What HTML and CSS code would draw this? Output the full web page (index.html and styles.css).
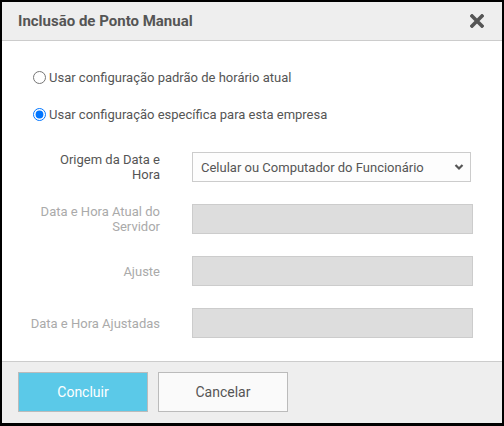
FILE: index.html
```html
<!DOCTYPE html>
<html lang="pt-BR">
<head>
<meta charset="utf-8">
<title>Inclusão de Ponto Manual</title>
<link rel="stylesheet" href="styles.css">
</head>
<body>
<div class="dialog">
  <div class="dialog-header">
    <h1 class="dialog-title">Inclusão de Ponto Manual</h1>
    <button class="close-btn" type="button" aria-label="Fechar">
      <svg width="14" height="14" viewBox="0 0 14 14"><path d="M2 2 L12 12 M12 2 L2 12" stroke="#555" stroke-width="3.6" stroke-linecap="square"/></svg>
    </button>
  </div>
  <div class="dialog-body">
    <label class="radio-row"><input type="radio" name="cfg"><span>Usar configuração padrão de horário atual</span></label>
    <label class="radio-row"><input type="radio" name="cfg" checked><span>Usar configuração específica para esta empresa</span></label>
    <div class="form">
      <div class="form-row">
        <label class="form-label">Origem da Data e Hora</label>
        <div class="select-wrap">
          <select class="select">
            <option>Celular ou Computador do Funcionário</option>
          </select>
          <svg class="chevron" width="10" height="8" viewBox="0 0 10 8"><path d="M1.5 2 L5 5.5 L8.5 2" fill="none" stroke="#555" stroke-width="2.2"/></svg>
        </div>
      </div>
      <div class="form-row">
        <label class="form-label disabled">Data e Hora Atual do Servidor</label>
        <input class="input" type="text" disabled>
      </div>
      <div class="form-row">
        <label class="form-label disabled">Ajuste</label>
        <input class="input" type="text" disabled>
      </div>
      <div class="form-row">
        <label class="form-label disabled">Data e Hora Ajustadas</label>
        <input class="input" type="text" disabled>
      </div>
    </div>
  </div>
  <div class="dialog-footer">
    <button class="btn btn-primary" type="button">Concluir</button>
    <button class="btn btn-default" type="button">Cancelar</button>
  </div>
</div>
</body>
</html>
```
FILE: styles.css
```css
html, body {
  margin: 0;
  padding: 0;
  background: #000;
}
body {
  font-family: Roboto, "Liberation Sans", Arial, sans-serif;
  color: #555;
}
.dialog {
  width: 500px;
  height: 421px;
  border: 2px solid #000;
  border-bottom-width: 3px;
  background: #fff;
  display: flex;
  flex-direction: column;
}
.dialog-header {
  height: 38px;
  background: #eeeeee;
  border-bottom: 1px solid #cccccc;
  display: flex;
  align-items: center;
  justify-content: space-between;
  padding: 0 18px 0 16px;
}
.dialog-title {
  margin: 0;
  font-size: 15px;
  font-weight: 700;
  color: #555;
}
.close-btn {
  border: 0;
  background: none;
  padding: 0;
  width: 14px;
  height: 14px;
  display: block;
  cursor: pointer;
}
.close-btn svg { display: block; }
.dialog-body {
  flex: 1;
  padding: 28px 0 0 0;
}
.radio-row {
  display: flex;
  align-items: center;
  height: 16px;
  margin-left: 26px;
  margin-bottom: 21px;
  font-size: 13px;
  color: #555;
}
.radio-row input {
  margin: 0 3px 0 5px;
  width: 13px;
  height: 13px;
}
.form {
  padding-top: 9px;
  display: flex;
  flex-direction: column;
  gap: 22px;
}
.form-row {
  display: flex;
  align-items: center;
  height: 30px;
}
.form-label {
  width: 130px;
  margin-left: 28px;
  margin-right: 32px;
  text-align: right;
  font-size: 13px;
  line-height: 15px;
  color: #555;
}
.form-label.disabled { color: #aaa; }
.select-wrap {
  position: relative;
  width: 279px;
  height: 30px;
}
.select {
  -webkit-appearance: none;
  appearance: none;
  width: 279px;
  height: 30px;
  box-sizing: border-box;
  border: 1px solid #cccccc;
  background: #fdfdfd;
  font-family: inherit;
  font-size: 13px;
  color: #555;
  padding: 0 0 0 8px;
  margin: 0;
  border-radius: 0;
}
.chevron {
  position: absolute;
  right: 7px;
  top: 11px;
}
.input {
  width: 281px;
  height: 30px;
  box-sizing: border-box;
  border: 1px solid #cccccc;
  background: #dddddd;
  margin: 0;
  padding: 0;
  border-radius: 0;
}
.dialog-footer {
  height: 51px;
  border-top: 1px solid #cccccc;
  background: #eeeeee;
  padding: 10px 0 0 16px;
  display: flex;
  gap: 10px;
  align-items: flex-start;
}
.btn {
  width: 130px;
  height: 40px;
  box-sizing: border-box;
  border: 1px solid #bbbbbb;
  font-family: inherit;
  font-size: 14px;
  cursor: pointer;
  border-radius: 0;
}
.btn-primary {
  background: #5bc9e8;
  color: #fff;
}
.btn-default {
  background: #fafafa;
  color: #555;
}
```
